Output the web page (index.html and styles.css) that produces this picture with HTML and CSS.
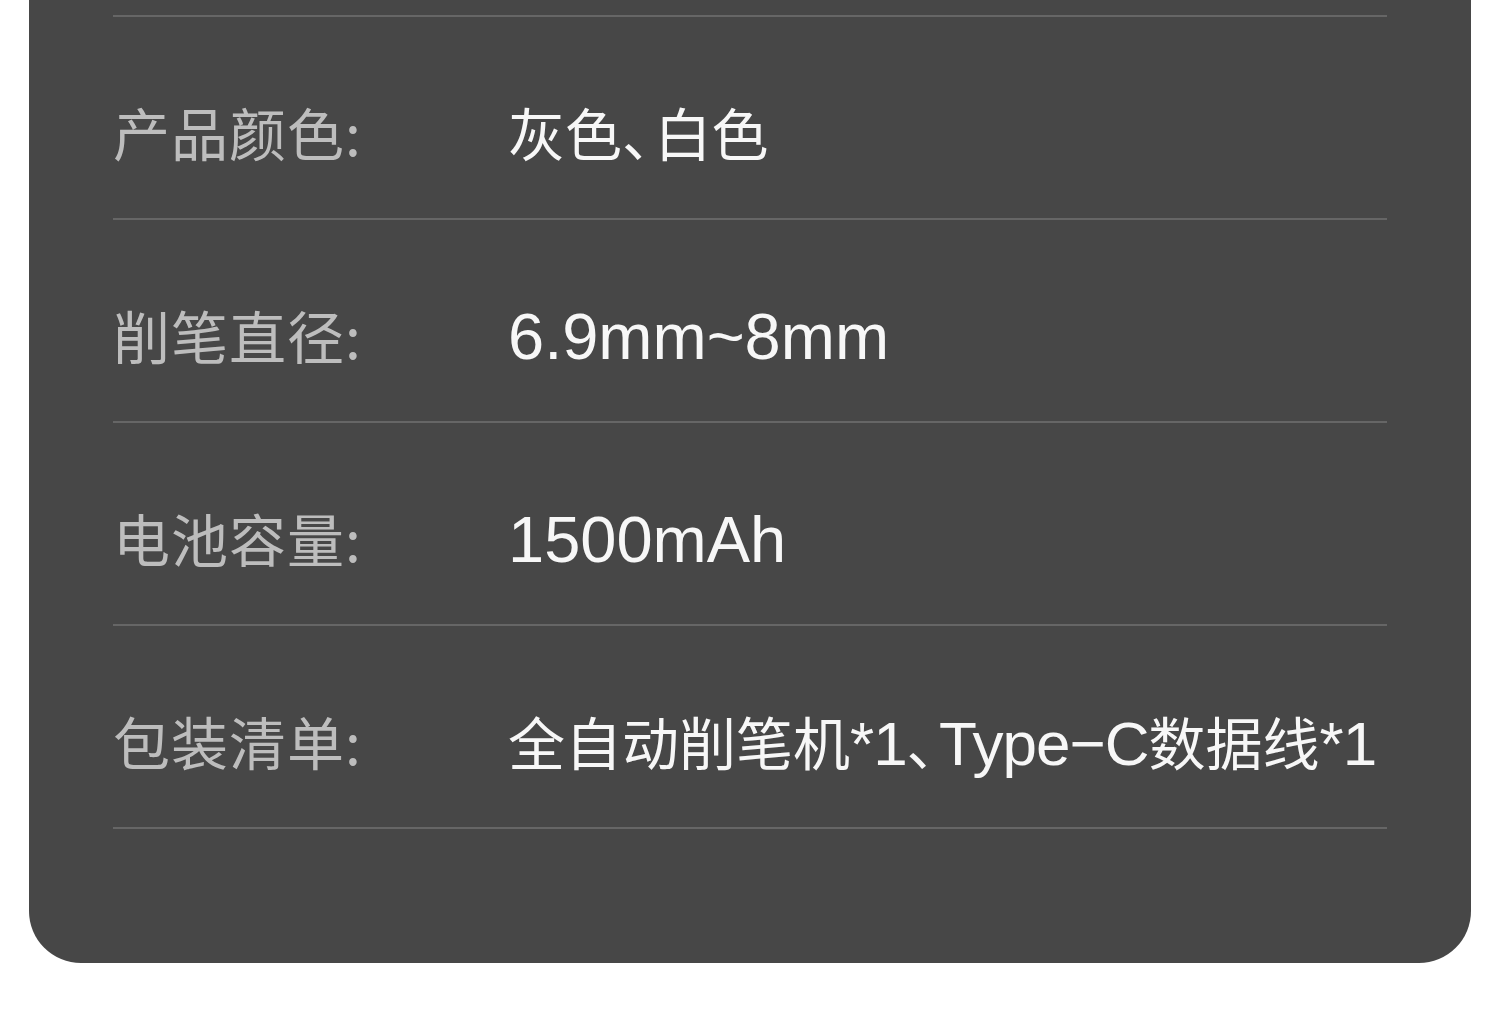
FILE: index.html
```html
<!DOCTYPE html>
<html lang="zh-CN">
<head>
  <meta charset="UTF-8">
  <meta name="viewport" content="width=device-width, initial-scale=1.0">
  <title>产品参数</title>
  <link rel="stylesheet" href="styles.css">
</head>
<body>
  <div class="spec-card">
    <div class="spec-row">
      <div class="spec-label">产品颜色:</div>
      <div class="spec-value">灰色<span class="dun">、</span>白色</div>
    </div>
    <div class="spec-row">
      <div class="spec-label">削笔直径:</div>
      <div class="spec-value"><span class="latin">6.9mm~8mm</span></div>
    </div>
    <div class="spec-row">
      <div class="spec-label">电池容量:</div>
      <div class="spec-value"><span class="latin">1500mAh</span></div>
    </div>
    <div class="spec-row">
      <div class="spec-label">包装清单:</div>
      <div class="spec-value">全自动削笔机<span class="latin tight">*1</span><span class="dun">、</span><span class="latin tight">Type−C</span>数据线<span class="latin tight">*1</span></div>
    </div>
  </div>
</body>
</html>
```

FILE: styles.css
```css
body {
  margin: 0;
  padding: 0;
  background: #ffffff;
  font-family: "Noto Sans CJK SC", sans-serif;
  overflow: hidden;
}

.spec-card {
  margin: -60px 29px 0;
  padding: 75px 84px 134px;
  background: #474747;
  border-radius: 0 0 52px 52px;
}

.spec-row {
  display: flex;
  align-items: baseline;
  box-sizing: border-box;
  height: 203px;
  border-top: 2px solid #666666;
  padding-top: 85px;
  font-size: 57px;
  line-height: 58px;
}

.spec-row:last-child {
  height: 205px;
  border-bottom: 2px solid #666666;
}

.spec-label {
  width: 395px;
  flex-shrink: 0;
  color: #bdbdbd;
  letter-spacing: 1px;
}

.spec-value {
  color: #f7f7f7;
  white-space: nowrap;
}

.dun {
  font-feature-settings: "halt";
  margin-right: 4px;
}

.latin {
  font-family: "Liberation Sans", sans-serif;
  font-size: 65px;
  line-height: 58px;
}

.latin.tight {
  font-size: 62px;
  letter-spacing: -1px;
}
```
